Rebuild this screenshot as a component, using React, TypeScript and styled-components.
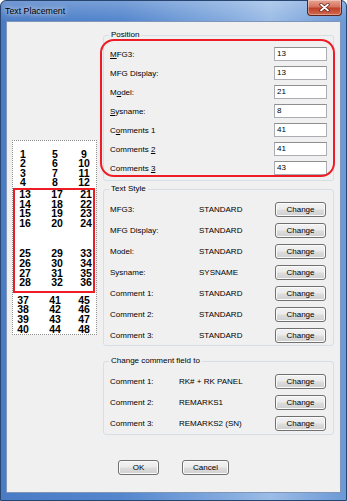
import React from 'react';
import styled, { createGlobalStyle } from 'styled-components';

const GlobalStyle = createGlobalStyle`
  html, body {
    margin: 0;
    padding: 0;
    background: #ffffff;
  }
  body {
    font-family: "Liberation Sans", Arial, sans-serif;
  }
`;

const positionRows = [
  { label: <><u>M</u>FG3:</>, value: '13' },
  { label: <>MFG Display:</>, value: '13' },
  { label: <>M<u>o</u>del:</>, value: '21' },
  { label: <><u>S</u>ysname:</>, value: '8' },
  { label: <>C<u>o</u>mments 1</>, value: '41' },
  { label: <>Comments <u>2</u></>, value: '41' },
  { label: <>Comments <u>3</u></>, value: '43' },
];

const styleRows = [
  { label: 'MFG3:', value: 'STANDARD' },
  { label: 'MFG Display:', value: 'STANDARD' },
  { label: 'Model:', value: 'STANDARD' },
  { label: 'Sysname:', value: 'SYSNAME' },
  { label: 'Comment 1:', value: 'STANDARD' },
  { label: 'Comment 2:', value: 'STANDARD' },
  { label: 'Comment 3:', value: 'STANDARD' },
];

const commentRows = [
  { label: 'Comment 1:', value: 'RK# + RK PANEL' },
  { label: 'Comment 2:', value: 'REMARKS1' },
  { label: 'Comment 3:', value: 'REMARKS2 (SN)' },
];

// builds the rows of a block of 4 lines x 3 columns, starting at a number
const block = (start: number) =>
  [0, 1, 2, 3].map((r) => [start + r, start + 4 + r, start + 8 + r]);

export default function App() {
  return (
    <>
      <GlobalStyle />
      <Window>
        <TitleBar>
          <Title>Text Placement</Title>
          <CloseButton>
            <svg width="11" height="9" viewBox="0 0 11 9">
              <path d="M2 1.5 L9 7.5 M9 1.5 L2 7.5" stroke="#5a1a10" strokeWidth="3.2" strokeLinecap="round" />
              <path d="M2 1.5 L9 7.5 M9 1.5 L2 7.5" stroke="#ffffff" strokeWidth="1.8" strokeLinecap="round" />
            </svg>
          </CloseButton>
        </TitleBar>
        <Client>
          <Body>
            <Sheet>
              <NumberGrid>
                {block(1).map((row) => row.map((n) => <Num key={n}>{n}</Num>))}
              </NumberGrid>
              <Highlight>
                <NumberGrid>
                  {block(13).map((row) => row.map((n) => <Num key={n}>{n}</Num>))}
                </NumberGrid>
                <NumberGrid $gap={21}>
                  {block(25).map((row) => row.map((n) => <Num key={n}>{n}</Num>))}
                </NumberGrid>
              </Highlight>
              <NumberGrid $gap={3}>
                {block(37).map((row) => row.map((n) => <Num key={n}>{n}</Num>))}
              </NumberGrid>
            </Sheet>
            <Groups>
              <GroupBox>
                <GroupTitle>Position</GroupTitle>
                <Rows $top={7} $gap={5} $bottom={5}>
                  {positionRows.map((r, i) => (
                    <Row key={i} $labelWidth={163}>
                      <Label>{r.label}</Label>
                      <Field>{r.value}</Field>
                    </Row>
                  ))}
                </Rows>
                <Marker />
              </GroupBox>
              <GroupBox $top={8}>
                <GroupTitle>Text Style</GroupTitle>
                <Rows $top={8} $gap={6} $bottom={2}>
                  {styleRows.map((r, i) => (
                    <Row key={i} $labelWidth={89} $right={7}>
                      <Label>{r.label}</Label>
                      <Value>{r.value}</Value>
                      <Button>Change</Button>
                    </Row>
                  ))}
                </Rows>
              </GroupBox>
              <GroupBox $top={15}>
                <GroupTitle>Change comment field to</GroupTitle>
                <Rows $top={8} $gap={6} $bottom={3}>
                  {commentRows.map((r, i) => (
                    <Row key={i} $labelWidth={69} $right={7}>
                      <Label>{r.label}</Label>
                      <Value>{r.value}</Value>
                      <Button>Change</Button>
                    </Row>
                  ))}
                </Rows>
              </GroupBox>
            </Groups>
          </Body>
          <Footer>
            <Button $width={41}>OK</Button>
            <Button $width={47}>Cancel</Button>
          </Footer>
        </Client>
      </Window>
    </>
  );
}

const Window = styled.div`
  width: 347px;
  height: 501px;
  box-sizing: border-box;
  display: flex;
  flex-direction: column;
  padding: 0 5px 7px 5px;
  border: 1px solid #27456e;
  border-radius: 6px 6px 0 0;
  font-size: 8px;
  background:
    linear-gradient(to bottom, rgba(255, 255, 255, 0.22), rgba(255, 255, 255, 0) 20px),
    linear-gradient(to right, #4a7cc6 0%, #5486cd 35%, #88aee0 68%, #9cbce6 78%, #6b99d6 100%);
`;

const TitleBar = styled.div`
  height: 20px;
  display: flex;
  align-items: flex-start;
  justify-content: space-between;
`;

const Title = styled.div`
  font-size: 8.8px;
  line-height: 20px;
  color: #000;
  margin-left: -1px;
  text-shadow: 0 0 4px rgba(255, 255, 255, 0.9), 0 0 8px rgba(255, 255, 255, 0.6);
`;

const CloseButton = styled.div`
  width: 35px;
  height: 16px;
  box-sizing: border-box;
  margin-top: -1px;
  margin-right: -1px;
  display: flex;
  align-items: center;
  justify-content: center;
  border: 1px solid #5e2418;
  border-top: none;
  border-radius: 0 0 4px 4px;
  background: linear-gradient(to bottom, #e8a493 0%, #d5735f 45%, #c1412a 55%, #cf6a4f 100%);
  box-shadow: inset 0 0 0 1px rgba(255, 255, 255, 0.35);
`;

const Client = styled.div`
  flex: 1;
  display: flex;
  flex-direction: column;
  background: #f0f0f0;
  border: 1px solid #7f96b8;
`;

const Body = styled.div`
  display: flex;
  align-items: flex-start;
  gap: 6px;
  padding: 13px 6px 0 5px;
`;

const Sheet = styled.div`
  width: 85px;
  box-sizing: border-box;
  margin-top: 105px;
  padding-top: 8.7px;
  background: #ffffff;
  border: 1px dotted #8c8c8c;
`;

const NumberGrid = styled.div<{ $gap?: number }>`
  display: grid;
  grid-template-columns: 20px 44px 14px;
  margin-top: ${(p) => p.$gap ?? 0}px;
`;

const Num = styled.span`
  font-size: 10.5px;
  font-weight: 700;
  line-height: 9.6px;
  text-align: center;
  color: #000;
`;

const Highlight = styled.div`
  border: 2px solid #ee1c24;
  margin-right: 1px;
  padding-bottom: 3px;
`;

const Groups = styled.div`
  width: 231px;
  display: flex;
  flex-direction: column;
`;

const GroupBox = styled.div<{ $top?: number }>`
  position: relative;
  margin-top: ${(p) => p.$top ?? 0}px;
  border: 1px solid #d5dfe5;
  border-radius: 3px;
  padding: 0 6px 0 6px;
`;

const GroupTitle = styled.div`
  display: block;
  width: fit-content;
  margin-top: -6px;
  margin-left: -1px;
  padding: 0 2px;
  background: #f0f0f0;
  font-size: 8px;
  line-height: 10px;
  height: 10px;
  color: #000;
`;

const Rows = styled.div<{ $top: number; $gap: number; $bottom: number }>`
  display: flex;
  flex-direction: column;
  gap: ${(p) => p.$gap}px;
  margin-top: ${(p) => p.$top}px;
  padding-bottom: ${(p) => p.$bottom}px;
`;

const Row = styled.div<{ $labelWidth: number; $right?: number }>`
  display: grid;
  grid-template-columns: ${(p) => p.$labelWidth}px 1fr auto;
  align-items: center;
  padding-right: ${(p) => (p.$right ?? 6) - 6}px;
`;

const Label = styled.span`
  font-size: 8px;
  color: #000;
  white-space: nowrap;
`;

const Value = styled.span`
  font-size: 8px;
  color: #000;
  white-space: nowrap;
`;

const Field = styled.div`
  grid-column: 3;
  width: 53px;
  height: 14px;
  box-sizing: border-box;
  padding-left: 2px;
  background: #ffffff;
  border: 1px solid #abadb3;
  border-top-color: #8e8f8f;
  font-size: 8px;
  line-height: 12px;
  color: #000;
`;

const Button = styled.div<{ $width?: number }>`
  width: ${(p) => p.$width ?? 51}px;
  height: 15px;
  box-sizing: border-box;
  display: flex;
  align-items: center;
  justify-content: center;
  border: 1px solid #707070;
  border-radius: 3px;
  background: linear-gradient(to bottom, #f2f2f2 0%, #ebebeb 48%, #dddddd 52%, #cfcfcf 100%);
  box-shadow: inset 0 0 0 1px #fbfbfb;
  font-size: 8px;
  color: #000;
`;

const Marker = styled.div`
  position: absolute;
  left: -4px;
  top: 3px;
  width: 235px;
  height: 138px;
  box-sizing: border-box;
  border: 2px solid #ee1c24;
  border-radius: 14px;
  pointer-events: none;
`;

const Footer = styled.div`
  display: flex;
  justify-content: center;
  gap: 23px;
  padding-top: 25px;
`;
